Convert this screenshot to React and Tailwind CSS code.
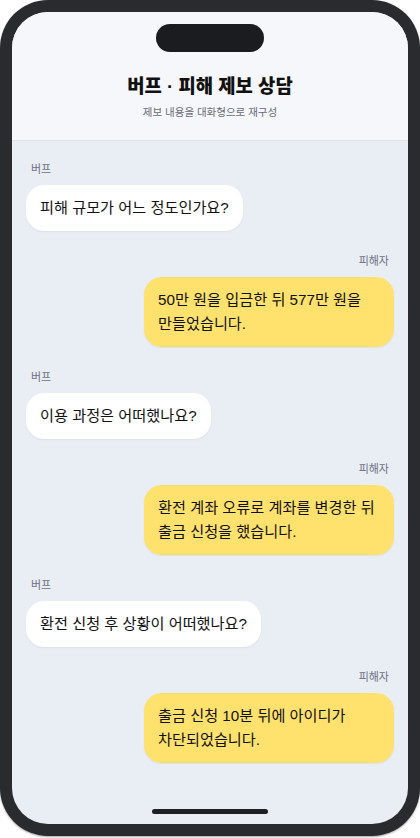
const messages = [
  { from: "bot", text: "피해 규모가 어느 정도인가요?" },
  { from: "user", text: "50만 원을 입금한 뒤 577만 원을 만들었습니다." },
  { from: "bot", text: "이용 과정은 어떠했나요?" },
  { from: "user", text: "환전 계좌 오류로 계좌를 변경한 뒤 출금 신청을 했습니다." },
  { from: "bot", text: "환전 신청 후 상황이 어떠했나요?" },
  { from: "user", text: "출금 신청 10분 뒤에 아이디가 차단되었습니다." },
];

function Bubble({ from, text }) {
  const isUser = from === "user";
  return (
    <div className={isUser ? "flex flex-col items-end gap-2" : "flex flex-col items-start gap-2"}>
      <span className="px-[5px] text-[11px] leading-4 text-[#6b7280]">
        {isUser ? "피해자" : "버프"}
      </span>
      <div
        className={
          isUser
            ? "max-w-[250px] break-keep rounded-[18px] bg-[#ffe16e] px-[14px] py-[11px] text-[15.2px] leading-[24px] text-[#111] shadow-[0_1px_2px_rgba(0,0,0,0.06)]"
            : "max-w-[250px] break-keep rounded-[18px] bg-white px-[14px] py-[11px] text-[15.2px] leading-[24px] text-[#111] shadow-[0_1px_2px_rgba(0,0,0,0.06)]"
        }
      >
        {text}
      </div>
    </div>
  );
}

export default function App() {
  return (
    <div
      className="h-[838px] w-[420px] bg-white"
      style={{ fontFamily: '"Liberation Sans", "Noto Sans CJK KR", sans-serif' }}
    >
      <div className="h-[836px] rounded-[48px] bg-[#2a2b2f] p-[12px] shadow-[0_1px_2px_rgba(0,0,0,0.35)]">
        <div className="relative flex h-full flex-col overflow-hidden rounded-[36px] bg-[#e9edf4]">
          {/* Header */}
          <div className="flex flex-col items-center border-b border-[#dde1e8] bg-[#f6f7fb] pb-[21px]">
            <div className="mt-3 h-7 w-[108px] rounded-full bg-[#1b1c1f]" />
            <h1 className="mt-[23px] text-[18.8px] font-extrabold leading-6 text-[#111]">
              버프 · 피해 제보 상담
            </h1>
            <p className="mt-[6px] text-[10.5px] leading-[14px] text-[#656b76]">
              제보 내용을 대화형으로 재구성
            </p>
          </div>

          {/* Chat */}
          <div className="flex flex-col gap-[22px] px-[14px] pt-[20px]">
            {messages.map((m, i) => (
              <Bubble key={i} {...m} />
            ))}
          </div>

          {/* Home indicator */}
          <div className="absolute bottom-[10px] left-1/2 h-[5px] w-[116px] -translate-x-1/2 rounded-full bg-[#1f2023]" />
        </div>
      </div>
    </div>
  );
}
